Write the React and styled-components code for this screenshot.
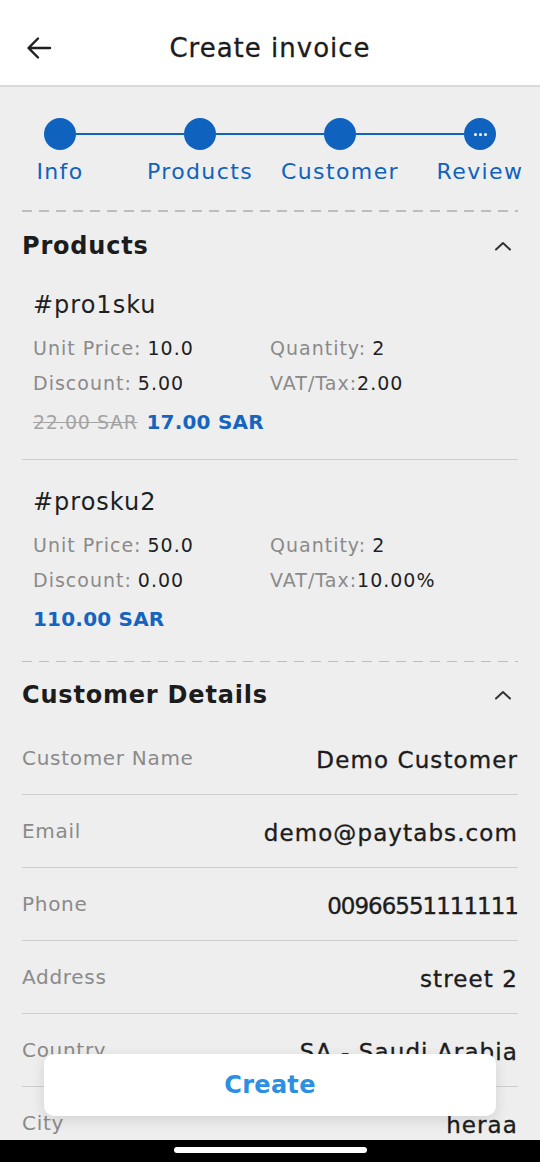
import React from 'react';
import styled, { createGlobalStyle } from 'styled-components';

const GlobalStyle = createGlobalStyle`
  html, body {
    margin: 0;
    padding: 0;
    background: #eeeeee;
  }
  * {
    box-sizing: border-box;
  }
`;

const BLUE = '#0f62be';

const Page = styled.div`
  position: relative;
  width: 540px;
  height: 1162px;
  overflow: hidden;
  display: flex;
  flex-direction: column;
  background: #eeeeee;
  font-family: "DejaVu Sans", "Open Sans", sans-serif;
  color: #1f1f1f;
`;

const Header = styled.header`
  flex: none;
  height: 87px;
  background: #fff;
  border-bottom: 2px solid #d8d8d8;
  display: flex;
  align-items: center;
  padding: 10px 24px 0;
`;

const BackButton = styled.button`
  border: 0;
  background: none;
  padding: 0;
  width: 30px;
  height: 30px;
  display: flex;
  align-items: center;
  justify-content: center;
  color: #1f1f1f;
`;

const Title = styled.h1`
  flex: 1;
  margin: 0 30px 0 0;
  text-align: center;
  font-size: 26px;
  font-weight: 400;
  letter-spacing: 1px;
  -webkit-text-stroke: 0.3px #1c1c1c;
  color: #1c1c1c;
`;

const Content = styled.main`
  flex: 1;
  overflow: hidden;
  padding: 0 22px;
`;

const Stepper = styled.div`
  display: flex;
  align-items: flex-start;
  padding: 31px 22px 0;
`;

const Step = styled.div`
  width: 32px;
  display: flex;
  flex-direction: column;
  align-items: center;
`;

const Dot = styled.div`
  width: 32px;
  height: 32px;
  border-radius: 50%;
  background: ${BLUE};
  display: flex;
  align-items: center;
  justify-content: center;
  gap: 2px;
`;

const Pip = styled.span`
  width: 3px;
  height: 3px;
  border-radius: 50%;
  background: #fff;
`;

const StepLabel = styled.span`
  margin-top: 10px;
  white-space: nowrap;
  font-size: 22px;
  line-height: 24px;
  letter-spacing: 1.4px;
  color: ${BLUE};
`;

const StepLine = styled.div`
  flex: 1;
  height: 1.5px;
  margin-top: 15px;
  background: ${BLUE};
`;

const Dashed = styled.div`
  height: 1.5px;
  margin-top: ${(p) => p.$top}px;
  background-image: repeating-linear-gradient(
    to right,
    #bdbdbd 0 10px,
    transparent 10px 17px
  );
`;

const SectionHead = styled.div`
  display: flex;
  align-items: center;
  justify-content: space-between;
  height: 32px;
  margin-top: ${(p) => p.$top}px;
`;

const SectionTitle = styled.h2`
  margin: 0;
  font-size: 24px;
  font-weight: 700;
  letter-spacing: 0.8px;
  color: #1c1c1c;
`;

const Chevron = styled.span`
  display: flex;
  margin-right: 6px;
  color: #333;
`;

const Product = styled.div`
  padding: ${(p) => p.$top}px 0 0 11px;
  height: ${(p) => p.$h}px;
  border-bottom: ${(p) => (p.$last ? '0' : '1.5px solid #cfcfcf')};
`;

const Sku = styled.div`
  font-size: 24px;
  line-height: 32px;
  letter-spacing: 1px;
  color: #1f1f1f;
`;

const Grid = styled.div`
  display: grid;
  grid-template-columns: 237px 1fr;
  row-gap: 9px;
  margin-top: 14px;
`;

const Field = styled.div`
  font-size: 19px;
  line-height: 26px;
  letter-spacing: 1px;
  white-space: nowrap;
`;

const Label = styled.span`
  color: #8a8a8a;
  margin-right: ${(p) => (p.$tight ? 0 : 6)}px;
`;

const Value = styled.span`
  color: #1f1f1f;
`;

const PriceRow = styled.div`
  margin-top: 14px;
  display: flex;
  align-items: baseline;
  gap: 9px;
`;

const OldPrice = styled.span`
  font-size: 19px;
  letter-spacing: 0.6px;
  color: #a4a4a4;
  text-decoration: line-through;
`;

const Price = styled.span`
  font-size: 20px;
  font-weight: 700;
  letter-spacing: 0.2px;
  color: #1565c0;
`;

const DetailRow = styled.div`
  height: 73px;
  display: flex;
  align-items: center;
  justify-content: space-between;
  border-bottom: 1.5px solid #cfcfcf;
`;

const DetailLabel = styled.span`
  font-size: 20px;
  letter-spacing: 0.7px;
  color: #8a8a8a;
`;

const DetailValue = styled.span`
  font-size: 23px;
  letter-spacing: ${(p) => (p.$numeric ? -1 : 1.1)}px;
  -webkit-text-stroke: 0.35px #1c1c1c;
  color: #1c1c1c;
  margin-top: 4px;
`;

const CreateButton = styled.button`
  position: absolute;
  left: 44px;
  right: 44px;
  bottom: 46px;
  height: 62px;
  border: 0;
  border-radius: 10px;
  background: #fff;
  box-shadow: 0 4px 14px rgba(0, 0, 0, 0.12);
  font-family: inherit;
  font-size: 24px;
  font-weight: 700;
  letter-spacing: 0.3px;
  color: #2d8fe3;
`;

const HomeBar = styled.div`
  flex: none;
  height: 22px;
  background: #000;
  display: flex;
  justify-content: center;
  padding-top: 7px;
`;

const Indicator = styled.div`
  width: 193px;
  height: 6px;
  border-radius: 3px;
  background: #fff;
`;

const ArrowLeft = () => (
  <svg width="26" height="24" viewBox="0 0 26 24" fill="none">
    <path
      d="M24 12H3M12 2.5L2.5 12 12 21.5"
      stroke="currentColor"
      strokeWidth="2.4"
      strokeLinecap="round"
      strokeLinejoin="round"
    />
  </svg>
);

const ChevronUp = () => (
  <svg width="18" height="10" viewBox="0 0 18 10" fill="none">
    <path
      d="M2 8.5L9 2l7 6.5"
      stroke="currentColor"
      strokeWidth="2"
      strokeLinecap="round"
      strokeLinejoin="round"
    />
  </svg>
);

const Spacer = styled.div`
  height: ${(p) => p.$h}px;
`;

const steps = ['Info', 'Products', 'Customer', 'Review'];

const products = [
  {
    sku: '#pro1sku',
    unit: '10.0',
    qty: '2',
    discount: '5.00',
    vat: '2.00',
    old: '22.00 SAR',
    total: '17.00 SAR',
  },
  {
    sku: '#prosku2',
    unit: '50.0',
    qty: '2',
    discount: '0.00',
    vat: '10.00%',
    old: null,
    total: '110.00 SAR',
  },
];

const customer = [
  ['Customer Name', 'Demo Customer'],
  ['Email', 'demo@paytabs.com'],
  ['Phone', '00966551111111', true],
  ['Address', 'street 2'],
  ['Country', 'SA - Saudi Arabia'],
  ['City', 'heraa'],
];

const App = () => (
  <>
    <GlobalStyle />
    <Page>
      <Header>
        <BackButton aria-label="Back">
          <ArrowLeft />
        </BackButton>
        <Title>Create invoice</Title>
      </Header>

      <Content>
        <Stepper>
          {steps.map((s, i) => (
            <React.Fragment key={s}>
              {i > 0 && <StepLine />}
              <Step>
                <Dot>
                  {i === steps.length - 1 && (
                    <>
                      <Pip />
                      <Pip />
                      <Pip />
                    </>
                  )}
                </Dot>
                <StepLabel>{s}</StepLabel>
              </Step>
            </React.Fragment>
          ))}
        </Stepper>

        <Dashed $top={26} />

        <SectionHead $top={18}>
          <SectionTitle>Products</SectionTitle>
          <Chevron>
            <ChevronUp />
          </Chevron>
        </SectionHead>

        {products.map((p, i) => (
          <Product
            key={p.sku}
            $top={i === 0 ? 27 : 26}
            $h={i === 0 ? 198 : 201}
            $last={i === products.length - 1}
          >
            <Sku>{p.sku}</Sku>
            <Grid>
              <Field>
                <Label>Unit Price:</Label>
                <Value>{p.unit}</Value>
              </Field>
              <Field>
                <Label>Quantity:</Label>
                <Value>{p.qty}</Value>
              </Field>
              <Field>
                <Label>Discount:</Label>
                <Value>{p.discount}</Value>
              </Field>
              <Field>
                <Label $tight>VAT/Tax:</Label>
                <Value>{p.vat}</Value>
              </Field>
            </Grid>
            <PriceRow>
              {p.old && <OldPrice>{p.old}</OldPrice>}
              <Price>{p.total}</Price>
            </PriceRow>
          </Product>
        ))}

        <Dashed $top={0} />

        <SectionHead $top={17}>
          <SectionTitle>Customer Details</SectionTitle>
          <Chevron>
            <ChevronUp />
          </Chevron>
        </SectionHead>

        <Spacer $h={11} />
        {customer.map(([k, v, numeric]) => (
          <DetailRow key={k}>
            <DetailLabel>{k}</DetailLabel>
            <DetailValue $numeric={numeric}>{v}</DetailValue>
          </DetailRow>
        ))}
      </Content>

      <CreateButton>Create</CreateButton>

      <HomeBar>
        <Indicator />
      </HomeBar>
    </Page>
  </>
);

export default App;
